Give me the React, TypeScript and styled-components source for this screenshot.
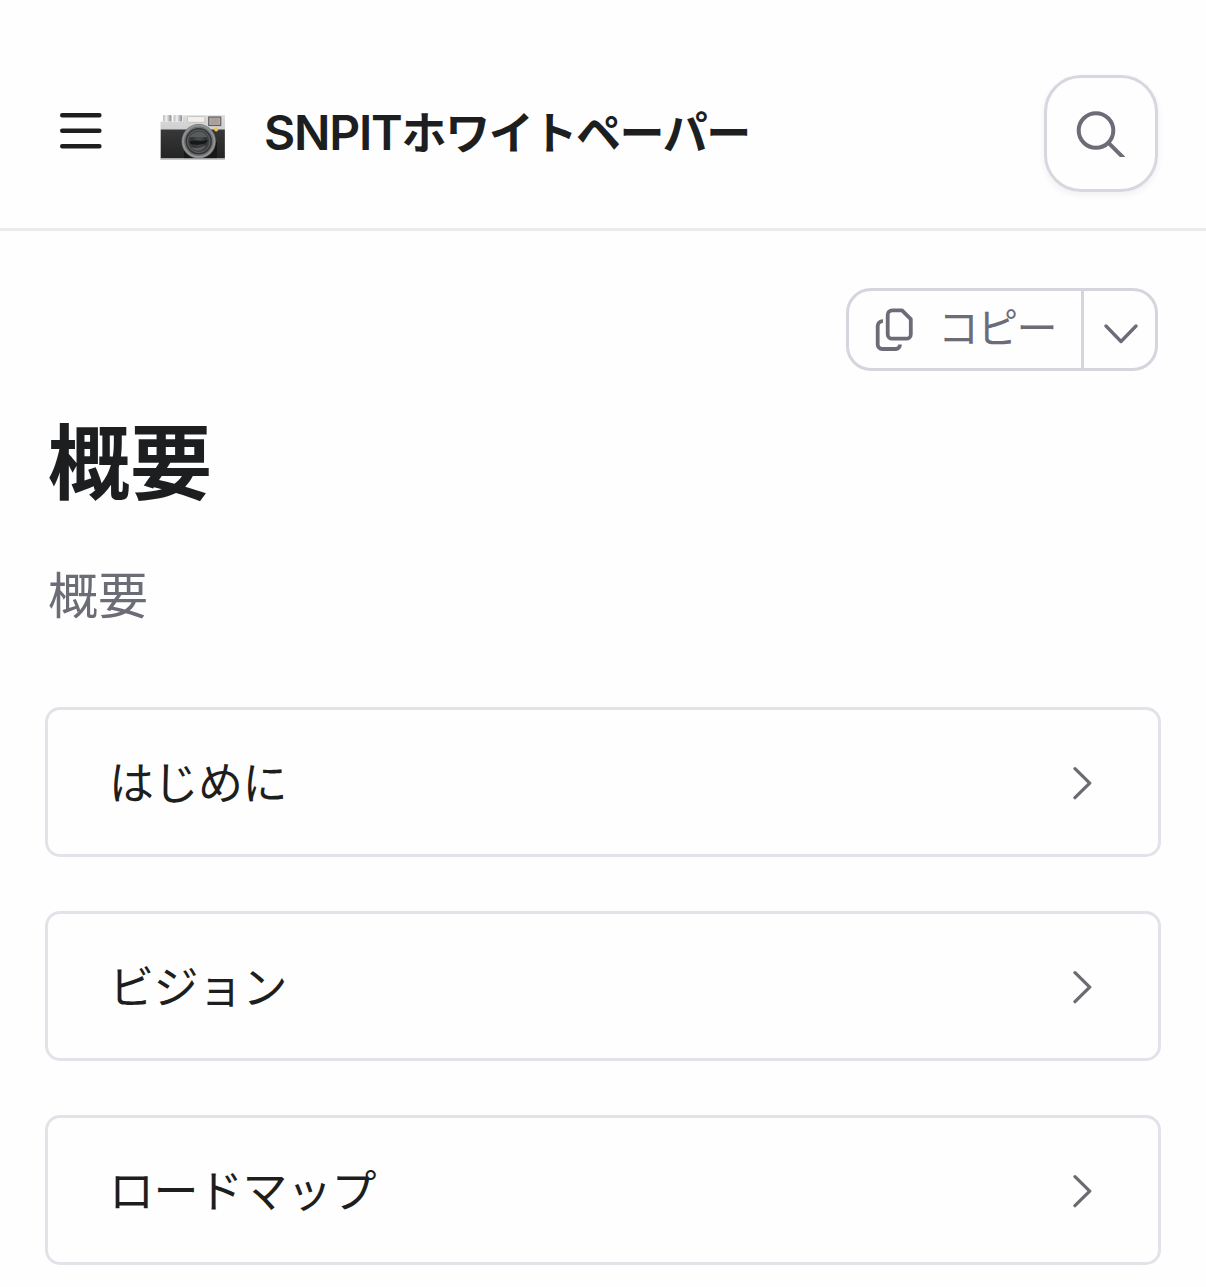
import React from "react";
import styled, { createGlobalStyle } from "styled-components";

const GlobalStyle = createGlobalStyle`
  *, *::before, *::after { box-sizing: border-box; }
  body {
    margin: 0;
    background: #fefefe;
    color: #1d1e20;
    font-family: Inter, "Noto Sans CJK JP", sans-serif;
    overflow: hidden;
  }
  button { font: inherit; color: inherit; background: none; border: 0; padding: 0; margin: 0; }
  svg { display: block; flex: none; }
`;

const Page = styled.div`
  width: 100%;
  height: 1287px;
  overflow: hidden;
`;

const Header = styled.header`
  display: flex;
  align-items: center;
  height: 231px;
  padding: 38px 48px 0 60px;
  border-bottom: 3px solid #ebebed;
`;

const MenuButton = styled.button`
  display: flex;
  margin: 0 58px 5px 0;
`;

const Brand = styled.a`
  display: flex;
  align-items: center;
  flex: 1;
  color: inherit;
  text-decoration: none;
`;

const CameraSvg = styled.svg`
  margin-top: 8px;
`;

const BrandName = styled.span`
  display: flex;
  align-items: baseline;
  margin: 0 0 2px 38px;
  font-weight: 600;
  line-height: 60px;
  white-space: nowrap;
`;

const Latin = styled.span`
  font-size: 48px;
  letter-spacing: -1.2px;
`;

const Kana = styled.span`
  font-family: "Noto Sans CJK JP", sans-serif;
  font-size: 45px;
  letter-spacing: -1.4px;
`;

const SearchButton = styled.button`
  display: flex;
  align-items: center;
  justify-content: center;
  width: 114px;
  height: 117px;
  padding: 2px 3px 0 0;
  border: 3px solid #d7d7e0;
  border-radius: 37px;
  box-shadow: 0 3px 6px rgba(60, 60, 110, 0.07);
`;

const Main = styled.main`
  display: flex;
  flex-direction: column;
  padding: 57px 45px 0;
`;

const SplitButton = styled.div`
  display: flex;
  align-self: flex-end;
  width: 312px;
  height: 83px;
  margin-right: 3px;
  border: 3px solid #d5d5de;
  border-radius: 25px;
  color: #6b6c76;
`;

const CopyButton = styled.button`
  display: flex;
  align-items: center;
  flex: 1;
  padding-left: 26px;
`;

const CopyLabel = styled.span`
  margin: -9px 0 0 24px;
  font-family: "Noto Sans CJK JP", sans-serif;
  font-size: 41px;
  font-weight: 400;
  line-height: 50px;
  letter-spacing: -1.8px;
  white-space: nowrap;
`;

const MoreButton = styled.button`
  display: flex;
  align-items: center;
  justify-content: center;
  width: 74px;
  padding: 8px 0 0 2px;
  border-left: 3px solid #d5d5de;
`;

const Title = styled.h1`
  margin: 27px 0 0 3px;
  font-family: "Noto Sans CJK JP", sans-serif;
  font-size: 82px;
  font-weight: 700;
  line-height: 120px;
`;

const Lead = styled.p`
  margin: 34px 0 0 3px;
  font-family: "Noto Sans CJK JP", sans-serif;
  font-size: 50px;
  line-height: 80px;
  color: #6b6c76;
`;

const CardList = styled.nav`
  display: grid;
  gap: 54px;
  margin-top: 75px;
`;

const Card = styled.a`
  display: flex;
  align-items: center;
  justify-content: space-between;
  height: 150px;
  padding: 1px 66px 0 61px;
  border: 3px solid #e2e2e9;
  border-radius: 15px;
  color: inherit;
  text-decoration: none;
`;

const CardLabel = styled.span`
  margin-bottom: 3px;
  font-family: "Noto Sans CJK JP", sans-serif;
  font-size: 45px;
  line-height: 66px;
  letter-spacing: -0.5px;
  white-space: nowrap;
`;

const MenuIcon = () => (
  <svg width="42" height="38" viewBox="0 0 42 38" fill="none" stroke="#1d1e20" strokeWidth="4.4" strokeLinecap="round">
    <path d="M2.2 3.2h37.2M2.2 18.7h37.2M2.2 34.2h37.2" />
  </svg>
);

const CameraIcon = () => (
  <CameraSvg width="66" height="47" viewBox="0 0 66 47">
    <defs>
      <linearGradient id="metal" x1="0" y1="0" x2="0" y2="1">
        <stop offset="0" stopColor="#dcdcdc" />
        <stop offset="1" stopColor="#b2b3b4" />
      </linearGradient>
      <linearGradient id="leather" x1="0" y1="0" x2="0" y2="1">
        <stop offset="0" stopColor="#383838" />
        <stop offset="1" stopColor="#242424" />
      </linearGradient>
      <linearGradient id="knob" x1="0" y1="0" x2="1" y2="0">
        <stop offset="0" stopColor="#b7b8b9" />
        <stop offset=".4" stopColor="#f0f0f0" />
        <stop offset="1" stopColor="#8a8b8d" />
      </linearGradient>
      <radialGradient id="glass">
        <stop offset="0" stopColor="#555758" />
        <stop offset=".65" stopColor="#303233" />
        <stop offset="1" stopColor="#48494b" />
      </radialGradient>
    </defs>
    <path d="M.5 7.5h22V1.2h42.5v44.5H.5z" fill="url(#metal)" />
    <rect x="3" y="1" width="8.5" height="6.5" rx="1.2" fill="url(#knob)" />
    <rect x="13.5" y="1" width="8.5" height="6.5" rx="1.2" fill="url(#knob)" />
    <path d="M.8 15.5h64v28.7H.8z" fill="url(#leather)" />
    <path d="M24 28h33v16.2H24z" fill="#171718" />
    <rect x="27.5" y="2.5" width="17.2" height="5.8" rx="1" fill="#f2f0e7" stroke="#aaa9a4" strokeWidth=".5" />
    <rect x="48.7" y="3" width="12" height="8.5" fill="#b8aba2" stroke="#606269" strokeWidth="1.2" />
    <path d="M50.5 5h8.3M50.5 7h8.3M50.5 9h8.3" stroke="#8e8782" strokeWidth=".6" />
    <circle cx="38.7" cy="27.3" r="17.2" fill="#6e7072" />
    <circle cx="38.7" cy="27.3" r="15.6" fill="none" stroke="#929496" strokeWidth="1.8" />
    <circle cx="38.7" cy="27.3" r="13.2" fill="#343638" />
    <circle cx="38.7" cy="27.3" r="11.3" fill="url(#glass)" stroke="#66696a" strokeWidth=".8" />
    <path d="M29.5 23c5-7 14-7 18 0-5 1-12 0-18 0z" fill="#666969" opacity=".75" />
    <path d="M29 28c5-3 10 0 19-2-2 5-7 4-11 5-4-1-6 0-8-3z" fill="#161819" />
    <path d="M31 33c5 2 10 1 15-2-2 6-10 8-15 2z" fill="#737575" opacity=".7" />
    <circle cx="56.2" cy="15.4" r="2" fill="#f4c443" />
    <path d="M.5 45.2h64.5" stroke="#c8c8c8" strokeWidth="1.2" />
  </CameraSvg>
);

const SearchIcon = () => (
  <svg width="50" height="46" viewBox="0 0 50 46" fill="none" stroke="#6b6c76" strokeWidth="4">
    <circle cx="21" cy="19.5" r="17.3" />
    <path d="M33 31.3 50 48.3" />
  </svg>
);

const CopyIcon = () => (
  <svg width="39" height="43" viewBox="0 0 39 43" fill="none" stroke="currentColor" strokeWidth="3.8" strokeLinecap="butt" strokeLinejoin="round">
    <path d="M17.2 2.4H27L35.8 11.2V26.2a4.5 4.5 0 0 1-4.5 4.5H17.2a4.5 4.5 0 0 1-4.5-4.5V6.9A4.5 4.5 0 0 1 17.2 2.4Z" />
    <path d="M8 13.1A5 5 0 0 0 2.7 18V36.5A4.5 4.5 0 0 0 7.2 41H20.7A4.5 4.5 0 0 0 25 36.5" />
  </svg>
);

const ChevronDown = () => (
  <svg width="34" height="20" viewBox="0 0 34 20" fill="none" stroke="currentColor" strokeWidth="3.3" strokeLinecap="round" strokeLinejoin="round">
    <path d="M2 2 17 17.5 32 2" />
  </svg>
);

const ChevronRight = () => (
  <svg width="20" height="34" viewBox="0 0 20 34" fill="none" stroke="#6b6c72" strokeWidth="3.3" strokeLinecap="round" strokeLinejoin="round">
    <path d="M3 2.7 17.7 17.2 3 31.7" />
  </svg>
);

const pages = ["はじめに", "ビジョン", "ロードマップ"];

export default function App() {
  return (
    <Page>
      <GlobalStyle />
      <Header>
        <MenuButton aria-label="メニュー"><MenuIcon /></MenuButton>
        <Brand>
          <CameraIcon />
          <BrandName><Latin>SNPIT</Latin><Kana>ホワイトペーパー</Kana></BrandName>
        </Brand>
        <SearchButton aria-label="検索"><SearchIcon /></SearchButton>
      </Header>
      <Main>
        <SplitButton>
          <CopyButton><CopyIcon /><CopyLabel>コピー</CopyLabel></CopyButton>
          <MoreButton aria-label="その他"><ChevronDown /></MoreButton>
        </SplitButton>
        <Title>概要</Title>
        <Lead>概要</Lead>
        <CardList>
          {pages.map((page) => (
            <Card key={page}><CardLabel>{page}</CardLabel><ChevronRight /></Card>
          ))}
        </CardList>
      </Main>
    </Page>
  );
}
